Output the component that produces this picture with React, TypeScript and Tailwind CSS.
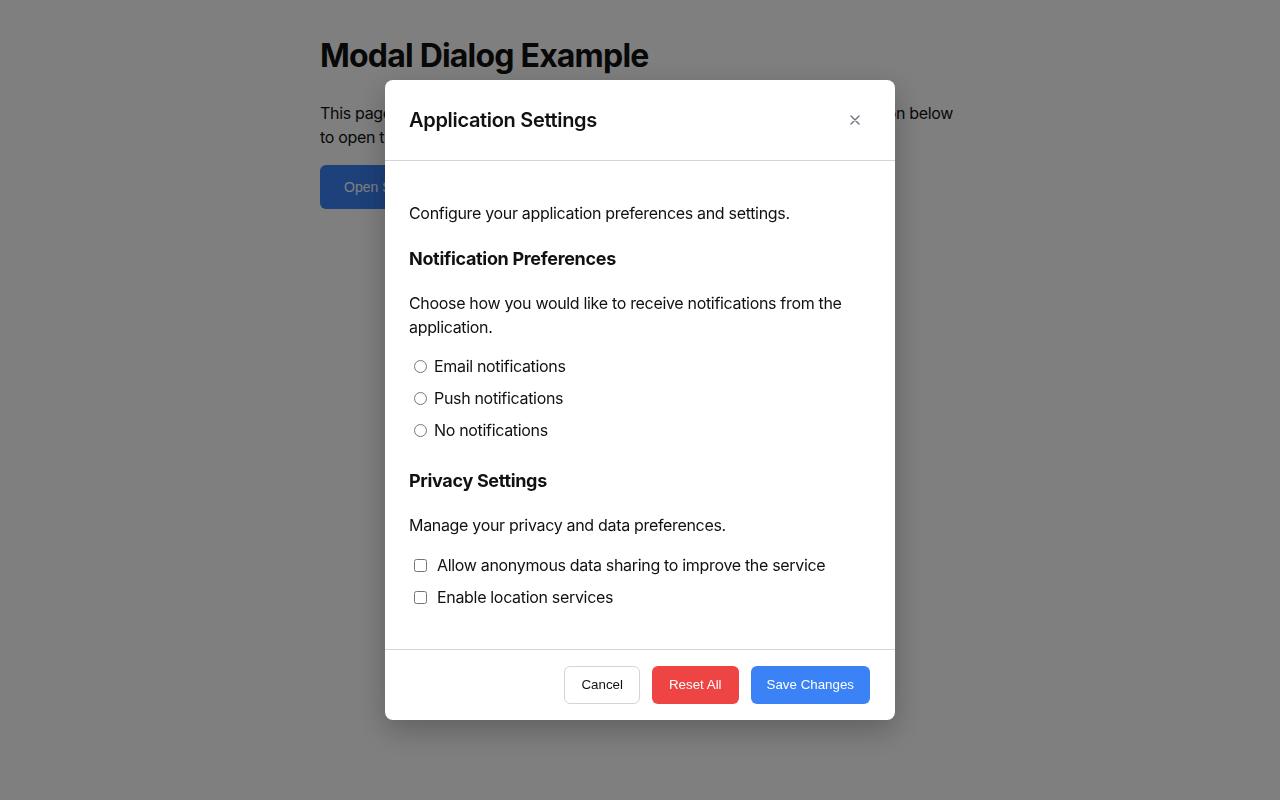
import { useState } from 'react'

const notificationOptions = ['Email notifications', 'Push notifications', 'No notifications']
const privacyOptions = ['Allow anonymous data sharing to improve the service', 'Enable location services']

const CloseIcon = () => (
  <svg width="10" height="10" viewBox="0 0 10 10" fill="none" stroke="currentColor" strokeWidth="1.4" strokeLinecap="round">
    <path d="M1 1l8 8M9 1l-8 8" />
  </svg>
)

const SettingsModal = () => {
  const [notify, setNotify] = useState('')
  const [privacy, setPrivacy] = useState<Record<string, boolean>>({})

  return (
    <div className="fixed inset-0 flex items-center justify-center bg-black/50">
      <div
        role="dialog"
        aria-modal="true"
        aria-labelledby="settings-title"
        className="flex w-[510px] flex-col rounded-lg bg-white shadow-[0_10px_30px_rgba(0,0,0,0.25)]"
      >
        <header className="flex items-center justify-between border-b border-[#d4d4dc] px-6 py-6">
          <h2 id="settings-title" className="text-[20px] leading-8 font-semibold text-[#111]">
            Application Settings
          </h2>
          <button aria-label="Close" className="flex h-8 w-8 items-center justify-center text-[#6b7280]">
            <CloseIcon />
          </button>
        </header>

        <div className="flex flex-col px-6 pt-6 pb-6 text-base leading-6 text-[#111]">
          <p className="mt-4">Configure your application preferences and settings.</p>

          <h3 className="mt-5 text-lg leading-7 font-bold">Notification Preferences</h3>
          <p className="mt-[18px]">Choose how you would like to receive notifications from the application.</p>
          <div className="mt-[15px] flex flex-col gap-2">
            {notificationOptions.map((option) => (
              <label key={option} className="flex h-6 items-center">
                <input
                  type="radio"
                  name="notify"
                  checked={notify === option}
                  onChange={() => setNotify(option)}
                  className="ml-[5px] h-[13px] w-[13px]"
                />
                <span className="ml-[7px]">{option}</span>
              </label>
            ))}
          </div>

          <h3 className="mt-[25px] text-lg leading-7 font-bold">Privacy Settings</h3>
          <p className="mt-[18px]">Manage your privacy and data preferences.</p>
          <div className="mt-4 mb-4 flex flex-col gap-2">
            {privacyOptions.map((option) => (
              <label key={option} className="flex h-6 items-center">
                <input
                  type="checkbox"
                  checked={!!privacy[option]}
                  onChange={() => setPrivacy({ ...privacy, [option]: !privacy[option] })}
                  className="ml-[5px] h-[13px] w-[13px]"
                />
                <span className="ml-[10px]">{option}</span>
              </label>
            ))}
          </div>
        </div>

        <footer className="flex justify-end gap-3 border-t border-[#d4d4dc] py-4 pr-[25px] pl-6 font-['Liberation_Sans',Arial,sans-serif] text-[13.33px] tracking-normal">
          <button className="h-[38px] rounded-md border border-[#d1d5db] bg-white px-4 text-[#111]">Cancel</button>
          <button className="h-[38px] rounded-md bg-[#ef4444] px-[17px] text-white">Reset All</button>
          <button className="h-[38px] rounded-md bg-[#3b82f6] px-4 text-white">Save Changes</button>
        </footer>
      </div>
    </div>
  )
}

const App = () => {
  return (
    <div className="min-h-screen bg-white font-['Inter','Noto_Sans',sans-serif] tracking-[-0.02em] text-[#111]">
      <main className="mx-auto w-[640px] pt-[37px]">
        <h1 className="text-[32px] leading-[38px] font-bold tracking-[-0.025em]">Modal Dialog Example</h1>
        <p className="mt-[26px] text-base leading-6">
          This page demonstrates an accessible modal dialog component. Click the button below to open the settings
          dialog.
        </p>
        <button className="mt-4 h-11 rounded-md bg-[#3b82f6] px-6 font-['Liberation_Sans',Arial,sans-serif] text-sm tracking-normal text-white">
          Open Settings
        </button>
      </main>
      <SettingsModal />
    </div>
  )
}

export default App
